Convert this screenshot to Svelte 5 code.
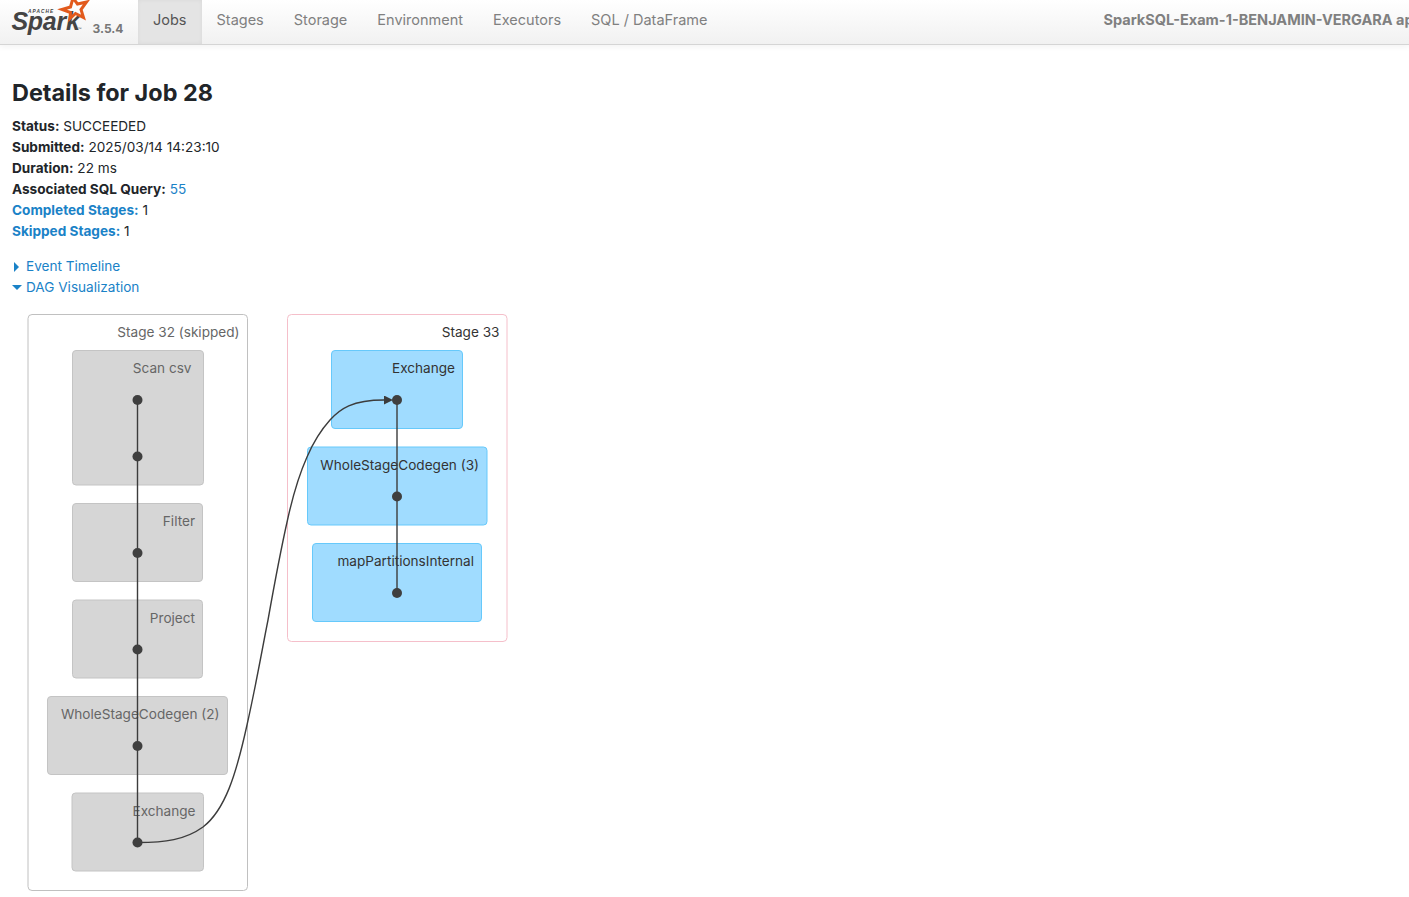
<script>
  const navItems = [
    { label: 'Jobs', active: true },
    { label: 'Stages' },
    { label: 'Storage' },
    { label: 'Environment' },
    { label: 'Executors' },
    { label: 'SQL / DataFrame' }
  ];
  const skippedNodes = [
    { label: 'Scan csv', x: 72.5, y: 350.5, w: 131, h: 134.5, tx: 191.5, ty: 373 },
    { label: 'Filter', x: 72.5, y: 503.5, w: 130, h: 78, tx: 195, ty: 526 },
    { label: 'Project', x: 72.5, y: 600, w: 130, h: 78, tx: 195, ty: 623 },
    { label: 'WholeStageCodegen (2)', x: 47.5, y: 696.5, w: 180, h: 78, tx: 219.5, ty: 719 },
    { label: 'Exchange', x: 72, y: 793, w: 131.5, h: 78, tx: 195.5, ty: 816 }
  ];
  const activeNodes = [
    { label: 'Exchange', x: 331.5, y: 350.5, w: 131, h: 78, tx: 455, ty: 373 },
    { label: 'WholeStageCodegen (3)', x: 307.5, y: 447, w: 179.5, h: 78, tx: 479, ty: 470 },
    { label: 'mapPartitionsInternal', x: 312.5, y: 543.5, w: 169, h: 78, tx: 474, ty: 566 }
  ];
  const skippedDots = [400, 456.5, 553, 649.5, 746, 842.5];
  const activeDots = [400, 496.5, 593];
</script>

<header class="navbar">
  <div class="brand">
    <svg class="logo" width="92" height="40" viewBox="0 0 92 40" aria-label="Apache Spark logo">
      <text class="logo-apache" x="28" y="13">APACHE</text>
      <text class="logo-spark" x="11.5" y="29.5">Spark</text>
      <text class="logo-tm" x="77.5" y="30">™</text>
      <path class="logo-star" d="M62 9.5 L70.5 7 L73 -2 L77.5 4 L86.5 2 L81 9.5 L83.5 17.5 L75.5 13.5 L70 18.5 L70.5 12.5 Z" />
    </svg>
    <span class="version">3.5.4</span>
  </div>
  <nav class="tabs">
    {#each navItems as item}
      <a class="tab" class:active={item.active} href="#top">{item.label}</a>
    {/each}
  </nav>
  <div class="app-name">SparkSQL-Exam-1-BENJAMIN-VERGARA application UI</div>
</header>

<main class="content">
  <h1>Details for Job 28</h1>
  <ul class="summary">
    <li><strong>Status:</strong> SUCCEEDED</li>
    <li><strong>Submitted:</strong> 2025/03/14 14:23:10</li>
    <li><strong>Duration:</strong> 22 ms</li>
    <li><strong>Associated SQL Query:</strong> <a href="#top">55</a></li>
    <li><a href="#top"><strong>Completed Stages:</strong></a> 1</li>
    <li><a href="#top"><strong>Skipped Stages:</strong></a> 1</li>
  </ul>
  <div class="toggles">
    <a class="toggle" href="#top"><span class="arrow right"></span>Event Timeline</a>
    <a class="toggle" href="#top"><span class="arrow down"></span>DAG Visualization</a>
  </div>
</main>

<svg class="dag" width="1409" height="897" viewBox="0 0 1409 897">
  <defs>
    <marker id="head" markerWidth="10" markerHeight="10" refX="0" refY="4.5" orient="auto" markerUnits="userSpaceOnUse">
      <path d="M0 0 L9 4.5 L0 9 Z" fill="#3c3c3c" />
    </marker>
  </defs>

  <rect class="cluster skipped" x="28" y="314.5" width="219.5" height="576" rx="4" />
  <text class="label grey" x="239.5" y="337">Stage 32 (skipped)</text>
  <rect class="cluster stage" x="287.5" y="314.5" width="219.5" height="327" rx="4" />
  <text class="label" x="499.5" y="337">Stage 33</text>

  {#each skippedNodes as n}
    <rect class="node off" x={n.x} y={n.y} width={n.w} height={n.h} rx="3.5" />
    <text class="label grey" x={n.tx} y={n.ty}>{n.label}</text>
  {/each}
  {#each activeNodes as n}
    <rect class="node on" x={n.x} y={n.y} width={n.w} height={n.h} rx="3.5" />
    <text class="label" x={n.tx} y={n.ty}>{n.label}</text>
  {/each}

  <path class="edge" d="M137.5 400 V842.5" />
  <path class="edge" d="M397 400 V593" />
  <path class="edge cross" d="M137.5 842.5 C165 842.5 185 840 203 827 C225 810 236 775 247 725 C256 685 262 650 268 620 C276 575 283 540 287.5 520 C293 495 299 475 307 457 C313 443 321 430 330 420 C340 409 352 400 384 400" marker-end="url(#head)" />

  {#each skippedDots as y}
    <circle class="dot" cx="137.5" cy={y} r="5" />
  {/each}
  {#each activeDots as y}
    <circle class="dot" cx="397" cy={y} r="5" />
  {/each}
</svg>

<style>
  :global(html), :global(body) {
    margin: 0;
    height: 897px;
    overflow: hidden;
    background: #fff;
  }
  :global(body) {
    font-family: Inter, "Liberation Sans", sans-serif;
    font-size: 13.6px;
    line-height: 21px;
    color: #212529;
    position: relative;
  }
  .navbar {
    display: flex;
    align-items: stretch;
    height: 44px;
    background: linear-gradient(#fff, #f1f1f1);
    border-bottom: 1px solid #d5d5d5;
    box-shadow: 0 2px 6px rgba(0, 0, 0, 0.05);
    white-space: nowrap;
    overflow: hidden;
    box-sizing: content-box;
  }
  .brand {
    width: 138px;
    flex: none;
    display: flex;
    position: relative;
  }
  .logo {
    position: absolute;
    left: 0;
    top: 0;
    overflow: hidden;
  }
  .logo-apache {
    font: italic 700 4.8px "Liberation Sans", sans-serif;
    letter-spacing: 1.05px;
    fill: #444;
  }
  .logo-spark {
    font: italic 700 25px "Liberation Sans", sans-serif;
    letter-spacing: -0.3px;
    fill: #444;
  }
  .logo-tm {
    font: 4px "Liberation Sans", sans-serif;
    fill: #555;
  }
  .logo-star {
    fill: none;
    stroke: #e25a1c;
    stroke-width: 3;
    stroke-linejoin: miter;
  }
  .version {
    position: absolute;
    left: 92.5px;
    top: 18px;
    font-size: 12px;
    font-weight: 700;
    color: #777;
  }
  .tabs {
    display: flex;
  }
  .tab {
    display: block;
    padding: 9px 15px 0;
    font-size: 14.5px;
    color: #808080;
    text-decoration: none;
  }
  .tab.active {
    background: #e4e4e4;
    color: #555;
    box-shadow: inset 0 0 4px rgba(0, 0, 0, 0.05);
  }
  .app-name {
    position: absolute;
    left: 1103.5px;
    top: 9px;
    font-size: 14.5px;
    font-weight: 700;
    color: #808080;
  }
  .content {
    padding: 0 12px;
  }
  h1 {
    margin: 0;
    padding-top: 33px;
    font-size: 23.4px;
    line-height: 29px;
    font-weight: 700;
    color: #212529;
  }
  .summary {
    list-style: none;
    margin: 9px 0 0;
    padding: 0;
  }
  strong {
    font-weight: 700;
  }
  a {
    color: #1a82c7;
    text-decoration: none;
  }
  .toggles {
    margin-top: 14px;
  }
  .toggle {
    display: flex;
    align-items: center;
    height: 21px;
  }
  .arrow {
    width: 14px;
    flex: none;
    display: inline-block;
    position: relative;
    height: 10px;
  }
  .arrow::before {
    content: "";
    position: absolute;
    width: 0;
    height: 0;
  }
  .arrow.right::before {
    left: 2px;
    top: 0;
    border-left: 5px solid #1a82c7;
    border-top: 5px solid transparent;
    border-bottom: 5px solid transparent;
  }
  .arrow.down::before {
    left: 0;
    top: 2px;
    border-top: 5px solid #1a82c7;
    border-left: 5px solid transparent;
    border-right: 5px solid transparent;
  }
  .dag {
    position: absolute;
    left: 0;
    top: 0;
    pointer-events: none;
  }
  .cluster {
    fill: #fff;
    stroke-width: 1;
  }
  .cluster.skipped {
    stroke: #c0c0c0;
  }
  .cluster.stage {
    stroke: #f5bfca;
  }
  .node.off {
    fill: #d6d6d6;
    stroke: #c4c4c4;
  }
  .node.on {
    fill: #a0dcff;
    stroke: #66c9fb;
  }
  .label {
    font-size: 13.6px;
    text-anchor: end;
    fill: #333;
  }
  .label.grey {
    fill: #666;
  }
  .edge {
    fill: none;
    stroke: #3c3c3c;
    stroke-width: 1.4;
  }
  .dot {
    fill: #3f3f3f;
  }
</style>
